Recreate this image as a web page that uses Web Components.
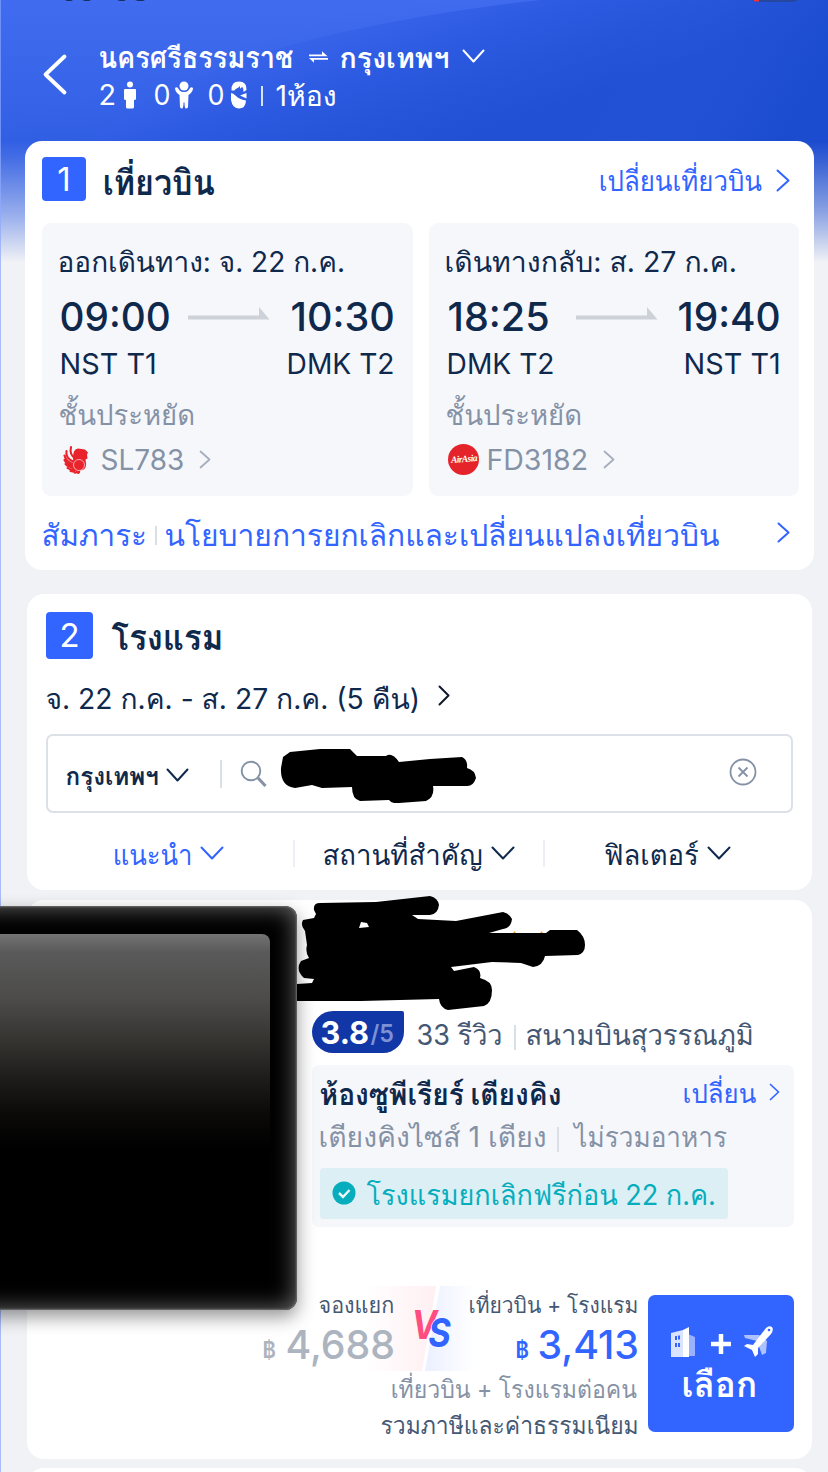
<!DOCTYPE html>
<html lang="th">
<head>
<meta charset="utf-8">
<title>เที่ยวบิน + โรงแรม</title>
<style>
html,body{margin:0;padding:0;background:#f0f2f6}
body{width:828px;height:1472px;overflow:hidden;font-family:Inter,Loma,"Noto Sans Thai","Noto Sans",sans-serif;color:#0f294d}
</style>
</head>
<body>
<trip-page></trip-page>
<script>
const ICONS={
 right:'<path d="M1.5 1.5 L{w1} {hm} L1.5 {h1}"/>',
 down:'<path d="M1.5 1.5 L{wm} {h1} L{w1} 1.5"/>',
 left:'<path d="M{w1} 1.5 L1.5 {hm} L{w1} {h1}"/>'
};
const define=(name,html,after)=>{
 customElements.define(name,class extends HTMLElement{
  connectedCallback(){
   if(this.shadowRoot)return;
   const t=document.createElement('template');
   t.innerHTML=typeof html==='function'?html(this):html;
   this.attachShadow({mode:'open'}).append(t.content.cloneNode(true));
   if(after)after(this);
  }
 });
};

/* Text label: s = size, b = baseline inside the row, w = ink width, g = gap before it */
const ctx=document.createElement('canvas').getContext('2d');
define('ui-label',e=>{
 const s=+e.getAttribute('s'),b=+e.getAttribute('b')+1,w=+e.getAttribute('w'),g=+e.getAttribute('g')||0,wt=e.getAttribute('wt')||400;
 return `<style>:host{display:block;flex:none;box-sizing:border-box;width:${w}px;height:${1.2*s}px;margin-left:${g}px;margin-top:${b-.9635*s}px;font-size:${s}px;line-height:${1.2*s}px;font-weight:${wt};white-space:pre}
 span{display:inline-block;transform-origin:0 0}</style><span><slot></slot></span>`;
},e=>{
 const s=e.getAttribute('s'),w=+e.getAttribute('w')-1.6,wt=e.getAttribute('wt')||400;
 ctx.font=`${wt} ${s}px Inter,Loma,"Noto Sans Thai","Noto Sans",sans-serif`;
 const m=ctx.measureText(e.textContent),l=m.actualBoundingBoxLeft,k=w/(l+m.actualBoundingBoxRight);
 e.shadowRoot.querySelector('span').style.transform=`translateX(${l*k+.5}px) scaleX(${k})`;
});
/* Chevron: n = direction, w/h = box, g = gap before, t = top inside the row */
define('ui-chevron',e=>{
 const w=+e.getAttribute('w'),h=+e.getAttribute('h'),v={w1:w-1.5,h1:h-1.5,wm:w/2,hm:h/2};
 return `<style>:host{display:block;flex:none;width:${w}px;height:${h}px;margin-left:${e.getAttribute('g')||0}px;margin-top:${e.getAttribute('t')||0}px}svg{display:block;overflow:visible}</style>
 <svg width="${w}" height="${h}" fill="none" stroke="currentColor" stroke-width="${e.getAttribute('sw')||2}" stroke-linecap="round" stroke-linejoin="round">${ICONS[e.getAttribute('n')].replace(/\{(\w+)\}/g,(a,k)=>v[k])}</svg>`;
});
define('ui-divider',e=>`<style>:host{display:block;flex:none;width:${e.getAttribute('w')||2}px;height:${e.getAttribute('h')}px;margin-left:${e.getAttribute('g')}px;margin-top:${e.getAttribute('t')}px;background:var(--line,#dadfe6)}</style>`);
define('step-badge',e=>`<style>:host{display:flex;flex:none;justify-content:center;width:${e.getAttribute('size')}px;height:${e.getAttribute('size')}px;background:#3264ff;border-radius:4px;color:#fff;font-size:33px;line-height:${e.getAttribute('size')}px}</style><slot></slot>`);

define('page-header',`<style>
:host{display:block;height:141px;color:#fff;position:relative}
.row{display:flex;align-items:flex-start}
.main{display:flex;align-items:flex-start;padding-left:44px}
.lines{margin-left:33px}
svg{display:block;flex:none}
.bits{position:absolute;left:0;top:0}
</style>
<svg class="bits" width="828" height="3"><path d="M65 0h8l-2 1h-4zM82 0h9l-2 1h-4zM117 0h9l-2 1h-4zM135 0h10l-2 1h-5z" fill="#16305f"/><path d="M752 0h46q-2 2-6 2h-33q-5 0-7-2z" fill="#25479f"/><path d="M753 0h6v1.500h-4z" fill="#ff3038"/></svg>
<div class="main">
<ui-chevron n="left" w="22" h="39" t="55" sw="3.800"></ui-chevron>
<div class="lines">
<div class="row" style="height:78px">
<ui-label s="29" b="68" w="195" wt="600">นครศรีธรรมราช</ui-label>
<svg width="21" height="12" style="margin:51px 0 0 14px" fill="#fff"><path d="M1 3.500h13V.300l5.500 5H1zM20 7H1l5 4.700V8.800h14z"/></svg>
<ui-label g="11" s="28" b="68" w="109" wt="600">กรุงเทพฯ</ui-label>
<ui-chevron g="13" n="down" w="23" h="14" t="49"></ui-chevron>
</div>
<div class="row">
<ui-label g="1" s="28" b="27" w="16">2</ui-label>
<svg width="14" height="28" style="margin:3px 0 0 7px" fill="#fff"><circle cx="7" cy="3.500" r="3"/><path d="M2 8h10q1 0 1 1v9q0 1-2 1v7q0 1.500-1.500 1.500h-5Q3 27.500 3 26v-7q-2 0-2-1V9q0-1 1-1z"/></svg>
<ui-label g="17" s="28" b="27" w="16">0</ui-label>
<svg width="20" height="28" style="margin:3px 0 0 4px" fill="#fff"><circle cx="10" cy="5" r="4.500"/><path d="M1 7q1.500-1.500 3 0 2 4 5 4h2q3 0 5-4 1.500-1.500 3 0 0 4-4.500 7l-.5 12q-.5 1.500-2 1.500t-1.500-6h-1q0 6-1.500 6t-2-1.500L5.500 14Q1 11 1 7z"/></svg>
<ui-label g="14" s="28" b="27" w="16">0</ui-label>
<svg width="18" height="28" style="margin:3px 0 0 6px" fill="#fff"><path d="M1.500 9.500Q1 .5 9 .5T16.500 9l-3 2q0-4-1.500-5.500-.5 2-2 2 .3-1.500-.5-2.500-.6 2-2.500 2.300Q5 8 4.500 9.500z"/><path d="M1 12q2 0 5 3t10 4.500q-.5 8-7 8T1 19z"/><path d="M10 14.500l6.500-2.500v5.500z"/></svg>
<ui-divider g="13" h="20" t="8" w="2" style="--line:#d9e2ff"></ui-divider>
<ui-label g="13" s="28" b="28" w="60">1ห้อง</ui-label>
</div>
</div></div>`);

define('airline-logo',e=>e.getAttribute('code')==='SL'?
`<style>:host{display:block;flex:none;width:28px;height:30px;margin:1px 0 0 4px}</style><svg width="28" height="30" viewBox="0 0 28 30"><g fill="none" stroke="#e8232c" stroke-width="2.100" stroke-linecap="round"><path d="M13 14Q6 10 8 2M11 17Q2 13 3.500 6M10 19Q3 17 1.500 10.500M10 21Q4 20 1.500 15M10 22.500Q6 22.500 2.500 19M11 24Q8 25.500 4.500 23M12 25Q11 27 7.500 26M14 25.500Q14 28 11.500 27.500M16 25.500Q16.500 28 15 28"/></g><path d="M10 12Q10 4 15 3.500l7 1 3 3-1 2 .5 4-2 1q2 9-3 10.500-6 2-8.500-2-1-6-1-11z" fill="#e8232c"/><circle cx="16" cy="20" r="5.500" fill="none" stroke="#fff" stroke-width=".6"/></svg>`:
`<style>:host{display:flex;flex:none;width:31px;height:31px;border-radius:50%;background:#e5232a;margin:0 0 0 2px;color:#fff;font:italic 700 9.500px/31px "Liberation Serif",serif;justify-content:center;letter-spacing:-.6px}span{transform:rotate(-5deg)}</style><span>AirAsia</span>`);

define('flight-leg',e=>{
 const a=k=>e.getAttribute(k);
 return `<style>
:host{display:block;box-sizing:border-box;height:273px;padding:0 19px 0 17px;background:#f6f7fb;border-radius:9px}
.row{display:flex;align-items:flex-start}.grey{color:#8592a6}
svg{display:block;flex:none}
</style>
<div class="row" style="height:67px"><ui-label s="28" b="49" w="${a('dw')}">${a('date')}</ui-label></div>
<div class="row" style="height:53px"><ui-label g="2" s="40" b="41" w="${a('t1w')}" wt="500">${a('t1')}</ui-label>
<svg width="82" height="14" style="margin:17px 0 0 ${a('ag')}px" fill="#cdd2d9"><path d="M0 8.500h71V0l10.500 12.500H0z"/></svg>
<ui-label style="margin-left:auto" s="40" b="41" w="${a('t2w')}" wt="500">${a('t2')}</ui-label></div>
<div class="row" style="height:49px"><ui-label g="2" s="29" b="31" w="${a('p1w')}">${a('p1')}</ui-label><ui-label style="margin-left:auto" s="29" b="31" w="${a('p2w')}">${a('p2')}</ui-label></div>
<div class="row grey" style="height:52px"><ui-label s="28" b="33" w="135">ชั้นประหยัด</ui-label></div>
<div class="row grey"><airline-logo code="${a('code')}"></airline-logo><ui-label g="${a('fg')}" s="28" b="26" w="${a('fw')}">${a('flight')}</ui-label><ui-chevron g="15" n="right" w="12" h="19" t="6" sw="1.700" style="color:#a3adbc"></ui-chevron></div>`;
});

define('flight-card',`<style>
:host{display:block;box-sizing:border-box;width:789px;height:429px;margin-left:25px;padding:0 16px 0 17px;background:#fff;border-radius:17px}
.row{display:flex;align-items:flex-start}.blue{color:#3264ff}
.head{height:66px;padding-top:16px}
.legs{display:grid;grid-template-columns:371px 370px;gap:16px}
</style>
<div class="row head"><step-badge size="44">1</step-badge><ui-label g="18" s="35" b="37" w="111" wt="700">เที่ยวบิน</ui-label>
<div class="row blue" style="margin-left:auto;margin-right:8px"><ui-label s="28" b="34" w="163">เปลี่ยนเที่ยวบิน</ui-label><ui-chevron g="13" n="right" w="14" h="23" t="12"></ui-chevron></div></div>
<div class="legs">
<flight-leg date="ออกเดินทาง: จ. 22 ก.ค." dw="285" t1="09:00" t1w="109" ag="18" t2="10:30" t2w="103" p1="NST T1" p1w="95" p2="DMK T2" p2w="106" code="SL" flight="SL783" fw="83" fg="10"></flight-leg>
<flight-leg date="เดินทางกลับ: ส. 27 ก.ค." dw="290" t1="18:25" t1w="101" ag="27" t2="19:40" t2w="102" p1="DMK T2" p1w="106" p2="NST T1" p2w="95" code="FD" flight="FD3182" fw="100" fg="9"></flight-leg>
</div>
<div class="row blue"><ui-label s="30" b="49" w="104">สัมภาระ</ui-label><ui-divider g="9" h="19" t="30" w="2"></ui-divider><ui-label g="8" s="30" b="49" w="555">นโยบายการยกเลิกและเปลี่ยนแปลงเที่ยวบิน</ui-label><ui-chevron g="57" n="right" w="13" h="21" t="26"></ui-chevron></div>`);

define('hotel-search',`<style>
:host{display:block;box-sizing:border-box;width:785px;height:296px;margin:24px 0 0 27px;padding:18px 19px 0;background:#fff;border-radius:17px}
.row{display:flex;align-items:flex-start}.blue{color:#3264ff}
.box{box-sizing:border-box;height:79px;border:2px solid #dce0e7;border-radius:7px;padding-left:18px}
svg{display:block;flex:none}
</style>
<div class="row" style="height:60px"><step-badge size="47">2</step-badge><ui-label g="18" s="36" b="38" w="111" wt="700">โรงแรม</ui-label></div>
<div class="row" style="height:62px"><ui-label s="28" b="37" w="373">จ. 22 ก.ค. - ส. 27 ก.ค. (5 คืน)</ui-label><ui-chevron g="19" n="right" w="12" h="21" t="13" style="color:#101a2a"></ui-chevron></div>
<div class="row box"><ui-label s="25" b="48" w="93" wt="600">กรุงเทพฯ</ui-label><ui-chevron g="7" n="down" w="23" h="14" t="32"></ui-chevron><ui-divider g="31" h="28" t="24"></ui-divider>
<svg width="28" height="28" style="margin:24px 0 0 18px" fill="none" stroke="#8592a6" stroke-width="1.900"><circle cx="11" cy="11" r="9.300"/><path d="M18 18l7.500 8" stroke-width="3"/></svg>
<svg width="198" height="56" viewBox="280 747 198 56" style="margin:11px 0 0 12px"><path d="M281 768Q283 757 283 757L290 752L320 749L350 749L357 756L386 756Q392 752 399 762L430 759L462 757Q468 760 467 768Q475 770 476 778Q473 787 466 786L433 786Q435 797 426 801L399 803Q392 804 389 800L360 801Q352 799 352 787L322 788L312 785L295 788Q280 786 281 768Z"/></svg>
<svg width="28" height="28" style="margin:22px 0 0 251px" fill="none" stroke="#8592a6" stroke-width="1.800"><circle cx="14" cy="14" r="12.500"/><path d="M9.500 9.500l9 9m0-9l-9 9"/></svg></div>
<div class="row"><div class="row blue" style="margin-left:68px"><ui-label s="28" b="52" w="78">แนะนำ</ui-label><ui-chevron g="8" n="down" w="24" h="14" t="33"></ui-chevron></div><ui-divider g="69" h="27" t="27" style="--line:#eceff3"></ui-divider>
<ui-label g="28" s="28" b="52" w="160">สถานที่สำคัญ</ui-label><ui-chevron g="8" n="down" w="24" h="14" t="33"></ui-chevron><ui-divider g="28" h="27" t="27" style="--line:#eceff3"></ui-divider>
<ui-label g="59" s="28" b="52" w="96">ฟิลเตอร์</ui-label><ui-chevron g="7" n="down" w="24" h="14" t="33"></ui-chevron></div>`);

define('photo-frame',`<style>
:host{display:block;position:absolute;left:-67px;top:6px;width:337px;height:404px;border-radius:12px;background:#000;box-shadow:inset 0 0 22px 2px #666,inset 0 0 2px 1px #777,0 7px 18px rgba(0,0,0,.42)}
div{width:310px;height:230px;margin-top:28px;border-radius:0 8px 0 0;background:linear-gradient(#737373 0,#5a5a5a 18px,#4c4b4a 65px,#343330 108px,#1d1c1a 145px,#0b0a09 180px,#000 215px)}
</style><div></div>`);

define('price-panel',`<style>
:host{display:flex;position:relative;justify-content:flex-end;height:146px;isolation:isolate}
.row{display:flex;align-items:flex-start}
.compare{display:grid;grid-template-columns:132px 74px 170px;height:85px}
.r{justify-content:flex-end}
.vs{position:relative}
.tint{position:absolute;z-index:-1;left:-30px;top:0}
.mark{display:block;font:italic 700 40px Inter,sans-serif}
.button{box-sizing:border-box;width:146px;height:137px;margin:9px 0 0 10px;border-radius:7px;background:#3264ff;color:#fff}
.button svg{display:block;margin:30px 0 0 20px}
</style>
<div>
<div class="compare">
<div style="color:#455873"><div class="row r" style="height:37px"><ui-label s="22" b="26" w="75">จองแยก</ui-label></div><div class="row r" style="color:#acb4bf"><ui-label s="23" b="35" w="14" wt="600">฿</ui-label><ui-label g="10" s="40" b="35.500" w="107" wt="500">4,688</ui-label></div></div>
<div class="vs"><svg class="tint" width="110" height="85"><defs><linearGradient id="p"><stop stop-color="#ffeff3" stop-opacity="0"/><stop offset="1" stop-color="#ffeff3"/></linearGradient><linearGradient id="q"><stop stop-color="#ebf0ff"/><stop offset="1" stop-color="#ebf0ff" stop-opacity="0"/></linearGradient></defs><path d="M0 0h72L58 85H0z" fill="url(#p)"/><path d="M76 0h34v85H61z" fill="url(#q)"/></svg>
<svg class="mark" width="74" height="85"><text transform="translate(17.500 53) scale(.86 1)"><tspan fill="#ff4d82">V</tspan><tspan dx="-10.500" dy="8" fill="#3264ff" stroke="#fff" stroke-width="1.200" paint-order="stroke">S</tspan></text></svg></div>
<div style="color:#455873"><div class="row r" style="height:37px"><ui-label s="22" b="26" w="169">เที่ยวบิน + โรงแรม</ui-label></div><div class="row r" style="color:#3264ff"><ui-label s="23" b="35" w="14" wt="600">฿</ui-label><ui-label g="9" s="40" b="35.500" w="99" wt="500">3,413</ui-label></div></div>
</div>
<div class="row r" style="color:#8592a6;height:36px"><ui-label s="25" b="26" w="246">เที่ยวบิน + โรงแรมต่อคน</ui-label></div>
<div class="row r" style="color:#455873"><ui-label s="24" b="27" w="257">รวมภาษีและค่าธรรมเนียม</ui-label></div>
</div>
<div class="button"><svg width="110" height="34" fill="#fff"><path d="M20 9l7 3v19h-7z" opacity=".5"/><path d="M3 8l12-3v27H3z" opacity=".82"/><path d="M15 5l6-3v30h-6z"/><path d="M7 11h2v4H7zM10 10.500h2v4h-2zM7 18h2v4H7zM10 18h2v4h-2z" fill="#3264ff"/><path d="M43 19h20M53 9v20" stroke="#fff" stroke-width="4.500"/><path d="M76 10l15 0 8 6-1 12-4 2-5-14-12-3z" opacity=".6"/><path d="M98 3q3-3 6-1 2 3-1 7L90 23v6l-3 3-3-7-8-4 3-2 6 1z"/><circle cx="101" cy="5" r="1.300" fill="#3264ff"/></svg>
<div class="row"><ui-label g="35" s="35" b="37" w="73" wt="600">เลือก</ui-label></div></div>`);

define('hotel-card',`<style>
:host{display:block;position:relative;box-sizing:border-box;width:785px;height:559px;margin:10px 0 0 27px;padding:111px 18px 0 0;background:#fff;border-radius:17px}
.row{display:flex;align-items:flex-start}
.info{margin-left:285px}
.score{width:92px;height:42px;background:#1136a6;border-radius:21px 2px 21px 21px;color:#fff}
.room{box-sizing:border-box;height:162px;padding-left:8px;background:#f6f7fb;border-radius:7px}
.free{width:408px;height:51px;background:#dceff5;border-radius:4px;color:#06aebd}
.scribble{position:absolute;left:269px;top:-5px}
</style>
<div class="info">
<div class="row" style="height:54px;color:#455873"><div class="row score"><ui-label g="9" s="31" b="32" w="48" wt="700">3.8</ui-label><ui-label g="1" s="24" b="31" w="24" wt="600" style="color:#7d92d5">/5</ui-label></div>
<ui-label g="13" s="28" b="34" w="85">33 รีวิว</ui-label><ui-divider g="12" h="25" t="14"></ui-divider><ui-label g="10" s="28" b="34" w="227">สนามบินสุวรรณภูมิ</ui-label></div>
<div class="room">
<div class="row" style="height:54px"><ui-label s="30" b="39" w="241" wt="700">ห้องซูพีเรียร์ เตียงคิง</ui-label><ui-label g="123" s="27" b="38" w="73" style="color:#3264ff">เปลี่ยน</ui-label><ui-chevron g="12" n="right" w="11" h="18" t="18" sw="1.700" style="color:#3264ff"></ui-chevron></div>
<div class="row" style="height:49px;color:#8592a6"><ui-label s="28" b="28" w="226">เตียงคิงไซส์ 1 เตียง</ui-label><ui-divider g="11" h="25" t="8"></ui-divider><ui-label g="13" s="28" b="28" w="156">ไม่รวมอาหาร</ui-label></div>
<div class="row free"><svg width="24" height="24" style="margin:13px 0 0 12px"><circle cx="12" cy="12" r="11.500" fill="#06aebd"/><path d="M7 12l4 4 6.500-7" fill="none" stroke="#e8f8fb" stroke-width="2.500"/></svg><ui-label g="10" s="28" b="37" w="349">โรงแรมยกเลิกฟรีก่อน 22 ก.ค.</ui-label></div>
</div></div>
<price-panel style="margin-top:59px"></price-panel>
<photo-frame></photo-frame>
<svg class="scribble" width="292" height="118" viewBox="296 895 292 118"><path fill-rule="evenodd" d="M314 910Q313 903 320 903L376 902L430 896Q438 898 439 905Q438 914 430 915L412 915L418 919L456 921L503 912Q510 914 512 919Q511 928 503 929L489 933L546 933L550 930L577 930Q585 936 585 945Q585 953 578 955L545 956Q543 966 533 967L521 963L492 962L451 967L454 971L474 967Q482 970 480 978Q492 981 492 990Q492 1003 484 1006L448 1010Q440 1008 439 999L361 1001L297 1001V984L312 983L314 979L304 978Q295 970 301 961L309 958Q305 952 307 945L305 931Q300 925 303 920L314 918L316 914ZM359 928L361 922L367 923L369 927Z"/><path d="M513 933l1.500-2 1.500 2zM540 933l1.500-2 1.500 2z" fill="#f3a536"/></svg>`);

define('trip-page',`<style>
:host{display:block;position:relative;width:828px;height:1472px;overflow:hidden;background:#f0f2f6;isolation:isolate}
.sky{position:absolute;z-index:-1;left:0;top:0;width:828px;height:265px;-webkit-mask:linear-gradient(#000 141px,rgba(0,0,0,.88) 160px,rgba(0,0,0,.45) 215px,transparent 262px);mask:linear-gradient(#000 141px,rgba(0,0,0,.88) 160px,rgba(0,0,0,.45) 215px,transparent 262px)}
.edge{position:absolute;z-index:-1;left:0;top:0;width:1px;height:1472px;background:linear-gradient(#6f92f8 141px,#a9bbf8 260px)}
.next{width:785px;height:40px;margin:9px 0 0 27px;background:#fff;border-radius:17px}
</style>
<svg class="sky" viewBox="0 0 828 265" preserveAspectRatio="none"><defs><linearGradient id="a" gradientUnits="userSpaceOnUse" x1="380" y1="0" x2="430" y2="150"><stop stop-color="#3a66ec"/><stop offset=".45" stop-color="#2b59df"/><stop offset="1" stop-color="#2150d4"/></linearGradient><linearGradient id="b" gradientUnits="userSpaceOnUse" x1="0" y1="0" x2="0" y2="150"><stop stop-color="#426df0"/><stop offset="1" stop-color="#2f5de2"/></linearGradient><linearGradient id="c" gradientUnits="userSpaceOnUse" x1="640" y1="30" x2="790" y2="120"><stop stop-color="#2a5ae2" stop-opacity="0"/><stop offset="1" stop-color="#1a4acd"/></linearGradient></defs>
<path d="M0 0h828v265H0z" fill="url(#a)"/><path d="M560 0h268v265H500z" fill="url(#c)" opacity=".8"/><path d="M0 0h540Q430 12 330 35Q180 70 88 141V265H0z" fill="url(#b)" opacity=".85"/></svg>
<div class="edge"></div>
<page-header></page-header>
<flight-card></flight-card>
<hotel-search></hotel-search>
<hotel-card></hotel-card>
<div class="next"></div>`);
</script>
</body>
</html>
